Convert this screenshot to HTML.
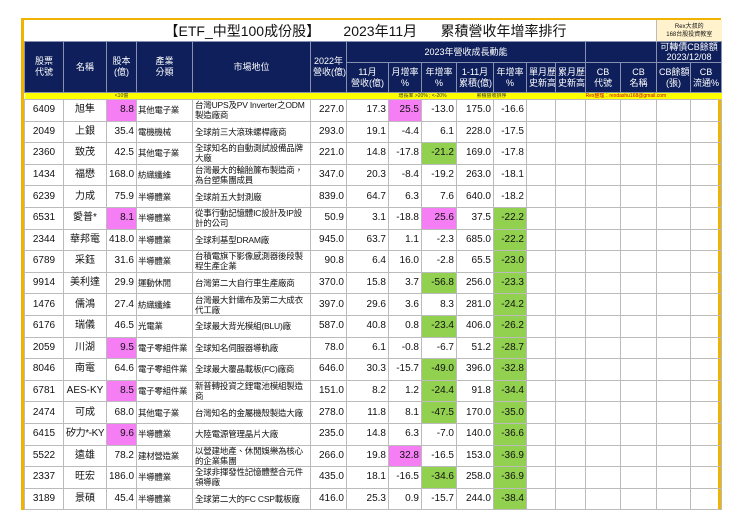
<!DOCTYPE html><html><head><meta charset="utf-8"><style>
body{margin:0;background:#fff;width:740px;height:523px;overflow:hidden;font-family:"Liberation Sans","Noto Sans CJK TC",sans-serif}
.wrap{position:absolute;left:21px;top:18px;width:694px;border:3px solid #f0b400;border-bottom:none;border-top-width:2px;background:#fff}
table{border-collapse:collapse;table-layout:fixed;width:694px}
td{border:1px solid #bbb;font-size:10px;color:#111;padding:0 2px;overflow:hidden;white-space:nowrap;line-height:10px}
.t td{border:none}
.h td{background:#0e1f5b;color:#fff;text-align:center;font-size:9px;border-color:#8890b0;line-height:11px}
.y td{background:#ffff00;height:6px;font-size:5px;line-height:6px;border:none;color:#a00;padding:0}
.d{height:21.6px}
.d td{height:auto;padding-top:0;padding-bottom:0}
.c{text-align:center}.r{text-align:right}
.s{font-size:8.5px;white-space:normal;line-height:10px;letter-spacing:-0.2px}
.i{font-size:8.5px;letter-spacing:-0.3px;padding:0 1px}
.p{background:#f57ef5}.g{background:#92d050}
</style></head><body><div class="wrap"><table>
<colgroup><col style="width:39px"><col style="width:43px"><col style="width:30px"><col style="width:56px"><col style="width:118px"><col style="width:36px"><col style="width:42px"><col style="width:33px"><col style="width:35px"><col style="width:37px"><col style="width:33px"><col style="width:29px"><col style="width:30px"><col style="width:35px"><col style="width:36px"><col style="width:34px"><col style="width:31px"></colgroup>
<tr class="t"><td colspan="15" style="height:21px;font-size:14px;line-height:14px;text-align:left;padding-left:140px">【ETF_中型100成份股】&nbsp;&nbsp;&nbsp;&nbsp;&nbsp;&nbsp;2023年11月&nbsp;&nbsp;&nbsp;&nbsp;&nbsp;&nbsp;累積營收年增率排行</td><td colspan="2" style="background:#fff2cc;font-size:6px;line-height:8px;text-align:center;border-left:1px solid #bbb">Rex大叔的<br>168台股投資教室</td></tr>
<tr class="h"><td rowspan="2">股票<br>代號</td><td rowspan="2">名稱</td><td rowspan="2">股本<br>(億)</td><td rowspan="2">產業<br>分類</td><td rowspan="2">市場地位</td><td rowspan="2">2022年<br>營收(億)</td><td colspan="7" style="height:18px">2023年營收成長動能</td><td colspan="2"></td><td colspan="2" style="font-size:9px;line-height:10px">可轉債CB餘額<br>2023/12/08</td></tr>
<tr class="h"><td style="height:29px">11月<br>營收(億)</td><td>月增率<br>%</td><td>年增率<br>%</td><td>1-11月<br>累積(億)</td><td>年增率<br>%</td><td>單月歷<br>史新高</td><td>累月歷<br>史新高</td><td>CB<br>代號</td><td>CB<br>名稱</td><td>CB餘額<br>(張)</td><td>CB<br>流通%</td></tr>
<tr class="y"><td></td><td></td><td class="c" style="color:#333">&lt;10億</td><td colspan="4"></td><td colspan="2" class="c" style="color:#333">增長率 &gt;20% ; &lt;-20%</td><td colspan="2" class="c" style="color:#333">累積營收排序</td><td colspan="2"></td><td colspan="4" style="color:#c00">Rex整理：rexdashu168@gmail.com</td></tr>
<tr class="d"><td class="c">6409</td><td class="c">旭隼</td><td class="r p">8.8</td><td class="i">其他電子業</td><td class="s">台灣UPS及PV Inverter之ODM製造廠商</td><td class="r">227.0</td><td class="r">17.3</td><td class="r p">25.5</td><td class="r">-13.0</td><td class="r">175.0</td><td class="r">-16.6</td><td></td><td></td><td></td><td></td><td></td><td></td></tr>
<tr class="d"><td class="c">2049</td><td class="c">上銀</td><td class="r">35.4</td><td class="i">電機機械</td><td class="s">全球前三大滾珠螺桿廠商</td><td class="r">293.0</td><td class="r">19.1</td><td class="r">-4.4</td><td class="r">6.1</td><td class="r">228.0</td><td class="r">-17.5</td><td></td><td></td><td></td><td></td><td></td><td></td></tr>
<tr class="d"><td class="c">2360</td><td class="c">致茂</td><td class="r">42.5</td><td class="i">其他電子業</td><td class="s">全球知名的自動測試設備品牌大廠</td><td class="r">221.0</td><td class="r">14.8</td><td class="r">-17.8</td><td class="r g">-21.2</td><td class="r">169.0</td><td class="r">-17.8</td><td></td><td></td><td></td><td></td><td></td><td></td></tr>
<tr class="d"><td class="c">1434</td><td class="c">福懋</td><td class="r">168.0</td><td class="i">紡織纖維</td><td class="s">台灣最大的輪胎簾布製造商，為台塑集團成員</td><td class="r">347.0</td><td class="r">20.3</td><td class="r">-8.4</td><td class="r">-19.2</td><td class="r">263.0</td><td class="r">-18.1</td><td></td><td></td><td></td><td></td><td></td><td></td></tr>
<tr class="d"><td class="c">6239</td><td class="c">力成</td><td class="r">75.9</td><td class="i">半導體業</td><td class="s">全球前五大封測廠</td><td class="r">839.0</td><td class="r">64.7</td><td class="r">6.3</td><td class="r">7.6</td><td class="r">640.0</td><td class="r">-18.2</td><td></td><td></td><td></td><td></td><td></td><td></td></tr>
<tr class="d"><td class="c">6531</td><td class="c">愛普*</td><td class="r p">8.1</td><td class="i">半導體業</td><td class="s">從事行動記憶體IC設計及IP設計的公司</td><td class="r">50.9</td><td class="r">3.1</td><td class="r">-18.8</td><td class="r p">25.6</td><td class="r">37.5</td><td class="r g">-22.2</td><td></td><td></td><td></td><td></td><td></td><td></td></tr>
<tr class="d"><td class="c">2344</td><td class="c">華邦電</td><td class="r">418.0</td><td class="i">半導體業</td><td class="s">全球利基型DRAM廠</td><td class="r">945.0</td><td class="r">63.7</td><td class="r">1.1</td><td class="r">-2.3</td><td class="r">685.0</td><td class="r g">-22.2</td><td></td><td></td><td></td><td></td><td></td><td></td></tr>
<tr class="d"><td class="c">6789</td><td class="c">采鈺</td><td class="r">31.6</td><td class="i">半導體業</td><td class="s">台積電旗下影像感測器後段製程生產企業</td><td class="r">90.8</td><td class="r">6.4</td><td class="r">16.0</td><td class="r">-2.8</td><td class="r">65.5</td><td class="r g">-23.0</td><td></td><td></td><td></td><td></td><td></td><td></td></tr>
<tr class="d"><td class="c">9914</td><td class="c">美利達</td><td class="r">29.9</td><td class="i">運動休閒</td><td class="s">台灣第二大自行車生產廠商</td><td class="r">370.0</td><td class="r">15.8</td><td class="r">3.7</td><td class="r g">-56.8</td><td class="r">256.0</td><td class="r g">-23.3</td><td></td><td></td><td></td><td></td><td></td><td></td></tr>
<tr class="d"><td class="c">1476</td><td class="c">儒鴻</td><td class="r">27.4</td><td class="i">紡織纖維</td><td class="s">台灣最大針織布及第二大成衣代工廠</td><td class="r">397.0</td><td class="r">29.6</td><td class="r">3.6</td><td class="r">8.3</td><td class="r">281.0</td><td class="r g">-24.2</td><td></td><td></td><td></td><td></td><td></td><td></td></tr>
<tr class="d"><td class="c">6176</td><td class="c">瑞儀</td><td class="r">46.5</td><td class="i">光電業</td><td class="s">全球最大背光模組(BLU)廠</td><td class="r">587.0</td><td class="r">40.8</td><td class="r">0.8</td><td class="r g">-23.4</td><td class="r">406.0</td><td class="r g">-26.2</td><td></td><td></td><td></td><td></td><td></td><td></td></tr>
<tr class="d"><td class="c">2059</td><td class="c">川湖</td><td class="r p">9.5</td><td class="i">電子零組件業</td><td class="s">全球知名伺服器導軌廠</td><td class="r">78.0</td><td class="r">6.1</td><td class="r">-0.8</td><td class="r">-6.7</td><td class="r">51.2</td><td class="r g">-28.7</td><td></td><td></td><td></td><td></td><td></td><td></td></tr>
<tr class="d"><td class="c">8046</td><td class="c">南電</td><td class="r">64.6</td><td class="i">電子零組件業</td><td class="s">全球最大覆晶載板(FC)廠商</td><td class="r">646.0</td><td class="r">30.3</td><td class="r">-15.7</td><td class="r g">-49.0</td><td class="r">396.0</td><td class="r g">-32.8</td><td></td><td></td><td></td><td></td><td></td><td></td></tr>
<tr class="d"><td class="c">6781</td><td class="c">AES-KY</td><td class="r p">8.5</td><td class="i">電子零組件業</td><td class="s">新普轉投資之鋰電池模組製造商</td><td class="r">151.0</td><td class="r">8.2</td><td class="r">1.2</td><td class="r g">-24.4</td><td class="r">91.8</td><td class="r g">-34.4</td><td></td><td></td><td></td><td></td><td></td><td></td></tr>
<tr class="d"><td class="c">2474</td><td class="c">可成</td><td class="r">68.0</td><td class="i">其他電子業</td><td class="s">台灣知名的金屬機殼製造大廠</td><td class="r">278.0</td><td class="r">11.8</td><td class="r">8.1</td><td class="r g">-47.5</td><td class="r">170.0</td><td class="r g">-35.0</td><td></td><td></td><td></td><td></td><td></td><td></td></tr>
<tr class="d"><td class="c">6415</td><td class="c" style="letter-spacing:-0.4px">矽力*-KY</td><td class="r p">9.6</td><td class="i">半導體業</td><td class="s">大陸電源管理晶片大廠</td><td class="r">235.0</td><td class="r">14.8</td><td class="r">6.3</td><td class="r">-7.0</td><td class="r">140.0</td><td class="r g">-36.6</td><td></td><td></td><td></td><td></td><td></td><td></td></tr>
<tr class="d"><td class="c">5522</td><td class="c">遠雄</td><td class="r">78.2</td><td class="i">建材營造業</td><td class="s">以營建地產、休閒娛樂為核心的企業集團</td><td class="r">266.0</td><td class="r">19.8</td><td class="r p">32.8</td><td class="r">-16.5</td><td class="r">153.0</td><td class="r g">-36.9</td><td></td><td></td><td></td><td></td><td></td><td></td></tr>
<tr class="d"><td class="c">2337</td><td class="c">旺宏</td><td class="r">186.0</td><td class="i">半導體業</td><td class="s">全球非揮發性記憶體整合元件領導廠</td><td class="r">435.0</td><td class="r">18.1</td><td class="r">-16.5</td><td class="r g">-34.6</td><td class="r">258.0</td><td class="r g">-36.9</td><td></td><td></td><td></td><td></td><td></td><td></td></tr>
<tr class="d"><td class="c">3189</td><td class="c">景碩</td><td class="r">45.4</td><td class="i">半導體業</td><td class="s">全球第二大的FC CSP載板廠</td><td class="r">416.0</td><td class="r">25.3</td><td class="r">0.9</td><td class="r">-15.7</td><td class="r">244.0</td><td class="r g">-38.4</td><td></td><td></td><td></td><td></td><td></td><td></td></tr>
</table></div></body></html>
